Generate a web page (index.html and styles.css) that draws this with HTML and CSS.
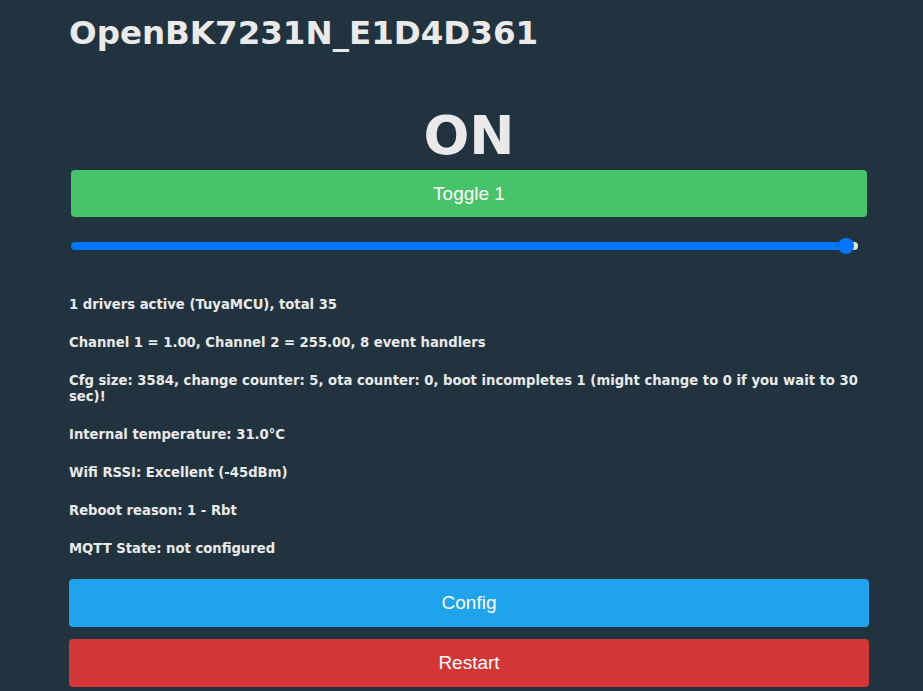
FILE: index.html
```html
<!DOCTYPE html>
<html lang="en">
<head>
    <meta charset="UTF-8" />
    <meta name="viewport" content="width=device-width, initial-scale=1.0" />
    <title>OpenBK7231N_E1D4D361</title>
    <link rel="stylesheet" href="styles.css">
</head>
<body>
    <div class="main">
        <h1 class="device-name">OpenBK7231N_E1D4D361</h1>

        <div class="state">ON</div>
        <form class="toggle-form">
            <button type="button" class="btn btn-green">Toggle 1</button>
        </form>
        <div class="dimmer">
            <input type="range" class="slider" min="0" max="1000" value="995">
        </div>

        <div class="info">
            <p>1 drivers active (TuyaMCU), total 35</p>
            <p>Channel 1 = 1.00, Channel 2 = 255.00, 8 event handlers</p>
            <p>Cfg size: 3584, change counter: 5, ota counter: 0, boot incompletes 1 (might change to 0 if you wait to 30 sec)!</p>
            <p>Internal temperature: 31.0°C</p>
            <p>Wifi RSSI: Excellent (-45dBm)</p>
            <p>Reboot reason: 1 - Rbt</p>
            <p>MQTT State: not configured</p>
        </div>

        <button type="button" class="btn btn-blue">Config</button>
        <button type="button" class="btn btn-red">Restart</button>
    </div>
</body>
</html>
```

FILE: styles.css
```css
:root {
    --bg-color: #223340;
    --text-color: #eaeaea;
    --green: #47c46a;
    --blue: #1fa3ec;
    --red: #d43535;
    --slider: #0075ff;
}
body {
    font-family: 'DejaVu Sans', Verdana, sans-serif;
    margin: 0;
    padding: 0;
    background-color: var(--bg-color);
    color: var(--text-color);
}
.main {
    width: 800px;
    margin-left: 69px;
}
.device-name {
    margin: 0;
    padding-top: 13px;
    font-size: 32.5px;
    font-weight: bold;
    line-height: 40px;
}
.state {
    margin-top: 52px;
    text-align: center;
    font-size: 54px;
    font-weight: bold;
    line-height: 62px;
}
.toggle-form {
    margin: 3px 0 0;
    padding: 0 2px;
}
.btn {
    display: block;
    width: 100%;
    height: 48px;
    border: none;
    border-radius: 4px;
    color: #fff;
    font-family: 'Liberation Sans', Arial, sans-serif;
    font-size: 19px;
    cursor: pointer;
    margin-bottom: 12px;
}
.toggle-form .btn {
    height: 47px;
}
.btn-green {
    background: var(--green);
}
.btn-blue {
    background: var(--blue);
}
.btn-red {
    background: var(--red);
}
.dimmer {
    padding: 13px 11px 0 2px;
    height: 33px;
}
.slider {
    -webkit-appearance: none;
    appearance: none;
    display: block;
    width: 100%;
    height: 8px;
    margin: 0;
    border-radius: 4px;
    background: linear-gradient(to right, var(--slider) 0%, var(--slider) 99%, #e5e5e5 99%);
    outline: none;
}
.slider::-webkit-slider-thumb {
    -webkit-appearance: none;
    appearance: none;
    width: 16px;
    height: 16px;
    border-radius: 50%;
    background: var(--slider);
    border: none;
}
.info {
    padding-top: 22px;
    padding-bottom: 22px;
}
.info p {
    margin: 0 0 22px;
    font-size: 13.2px;
    font-weight: bold;
    line-height: 16px;
}
.info p:last-child {
    margin-bottom: 0;
}
```
